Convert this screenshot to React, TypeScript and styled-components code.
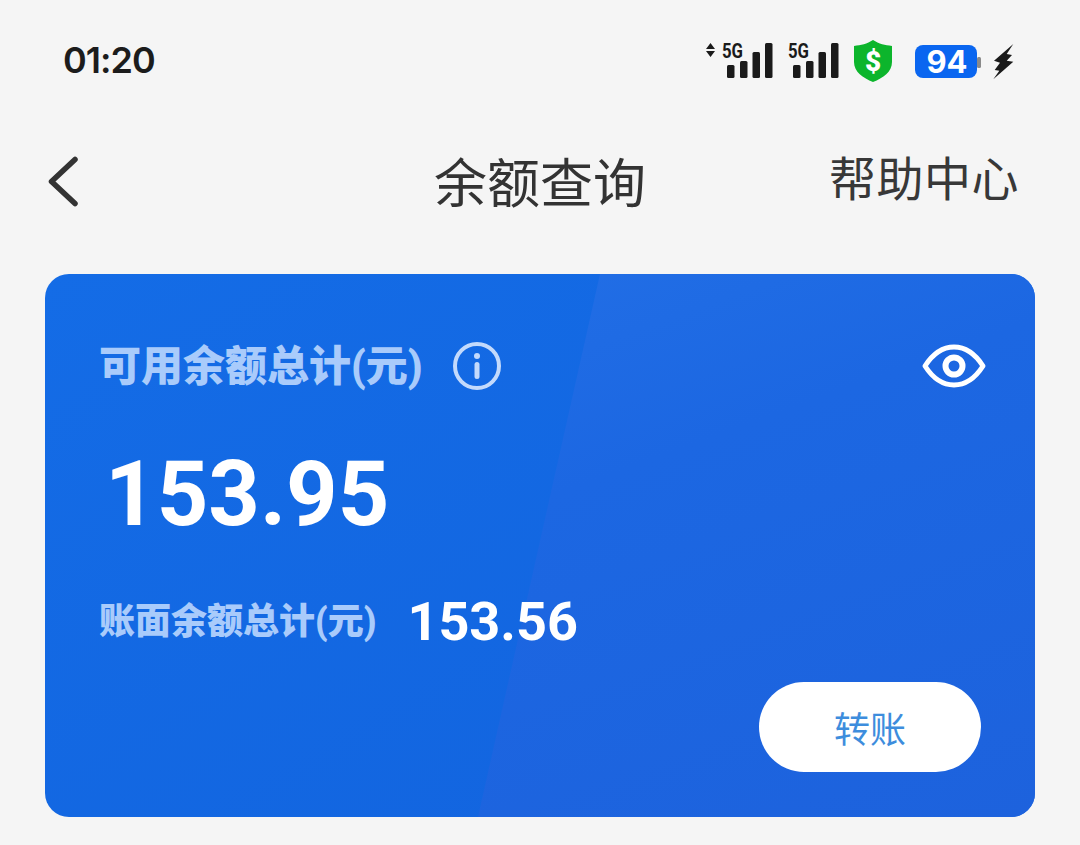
import React from 'react'
import styled, { createGlobalStyle } from 'styled-components'

const CJK = `Roboto, "Noto Sans CJK SC", sans-serif`

const GlobalStyle = createGlobalStyle`
  html, body {
    margin: 0;
    padding: 0;
    background: #f5f5f5;
  }
  body {
    font-family: ${CJK};
  }
`

const Page = styled.div`
  width: 1080px;
  height: 845px;
  overflow: hidden;
  background: #f5f5f5;
  display: flex;
  flex-direction: column;
`

const StatusBar = styled.div`
  height: 122px;
  padding: 0 60px 0 63px;
  box-sizing: border-box;
  display: flex;
  align-items: center;
  justify-content: space-between;
`

const Time = styled.div`
  font-family: Inter, sans-serif;
  font-size: 36px;
  font-weight: 600;
  letter-spacing: -1px;
  color: #1c1c1c;
  margin-top: -2px;
`

const NavBar = styled.div`
  height: 120px;
  padding: 0 61px 0 46px;
  margin-bottom: 32px;
  box-sizing: border-box;
  display: flex;
  align-items: center;
  justify-content: space-between;
  position: relative;
`

const Title = styled.div`
  position: absolute;
  left: 0;
  right: 0;
  text-align: center;
  font-size: 53px;
  font-weight: 400;
  color: #333;
  top: 29px;
  line-height: 68px;
`

const HelpLink = styled.div`
  font-size: 47px;
  letter-spacing: 0.5px;
  color: #383838;
  line-height: 64px;
  margin-top: -4px;
`

const Card = styled.div`
  position: relative;
  overflow: hidden;
  margin: 0 45px;
  height: 543px;
  border-radius: 24px;
  background: linear-gradient(150deg, #146ce6 0%, #1263de 100%);
  padding: 66px 49px 45px 54px;
  box-sizing: border-box;
  display: flex;
  flex-direction: column;
  &::before {
    content: '';
    position: absolute;
    inset: 0;
    clip-path: polygon(555px 0, 100% 0, 100% 100%, 433px 100%);
    background: linear-gradient(160deg, #2573e8 0%, #1c67e2 45%, #1d62dd 100%);
  }
`

const CardContent = styled.div`
  position: relative;
  display: flex;
  flex-direction: column;
  flex: 1;
`

const HeaderRow = styled.div`
  display: flex;
  align-items: center;
  justify-content: space-between;
  height: 52px;
`

const LabelGroup = styled.div`
  display: flex;
  align-items: center;
  gap: 30px;
`

const MainLabel = styled.div`
  font-size: 42px;
  font-weight: 900;
  color: #a9cbfb;
  line-height: 52px;
  margin-top: 2px;
`

const Amount = styled.div`
  font-family: Roboto, sans-serif;
  font-size: 90px;
  font-weight: 700;
  color: #fff;
  line-height: 100px;
  margin: 53px 0 0 6px;
`

const BookRow = styled.div`
  display: flex;
  align-items: center;
  gap: 31px;
  margin-top: 47px;
`

const BookLabel = styled.div`
  font-size: 36px;
  font-weight: 900;
  color: #a9cbfb;
  line-height: 60px;
`

const BookAmount = styled.div`
  font-family: Roboto, sans-serif;
  font-size: 54px;
  font-weight: 700;
  color: #fff;
  line-height: 60px;
`

const Footer = styled.div`
  margin-top: auto;
  display: flex;
  justify-content: flex-end;
`

const TransferButton = styled.div`
  width: 222px;
  height: 90px;
  margin-right: 5px;
  border-radius: 45px;
  background: #fff;
  color: #3d8ddd;
  font-size: 36px;
  display: flex;
  align-items: center;
  justify-content: center;
`

const BackIcon = () => (
  <svg width="34" height="52" viewBox="0 0 34 52" fill="none">
    <path d="M29 3.500 L5.500 25.500 L29 47.500" stroke="#333" strokeWidth="5.500" strokeLinecap="round" strokeLinejoin="round" />
  </svg>
)

const InfoIcon = () => (
  <svg width="48" height="48" viewBox="0 0 48 48" fill="none">
    <circle cx="24" cy="24" r="22" stroke="#c3dafc" strokeWidth="4" />
    <circle cx="24" cy="14" r="3" fill="#c3dafc" />
    <rect x="21.500" y="20" width="5" height="17" rx="2.500" fill="#c3dafc" />
  </svg>
)

const EyeIcon = () => (
  <svg width="64" height="44" viewBox="0 0 64 44" fill="none">
    <path d="M3 22 C12 8 22 3 32 3 C42 3 52 8 61 22 C52 36 42 41 32 41 C22 41 12 36 3 22 Z" stroke="#fff" strokeWidth="5" strokeLinejoin="round" />
    <circle cx="32" cy="22" r="8.500" stroke="#fff" strokeWidth="6" />
  </svg>
)

const SignalBars = ({ x }: { x: number }) => (
  <>
    <text x={x - 5} y="20" fontFamily="Roboto, sans-serif" fontWeight="700" fontSize="20" fill="#1a1a1a" textLength="21" lengthAdjust="spacingAndGlyphs">5G</text>
    <rect x={x} y="27" width="7.500" height="13" rx="1.500" fill="#1a1a1a" />
    <rect x={x + 13} y="23" width="7.500" height="17" rx="1.500" fill="#1a1a1a" />
    <rect x={x + 25.500} y="14" width="7.500" height="26" rx="1.500" fill="#1a1a1a" />
    <rect x={x + 38} y="5" width="7.500" height="35" rx="1.500" fill="#1a1a1a" />
  </>
)

const StatusGraphic = () => (
  <svg width="320" height="46" viewBox="0 0 320 46" fill="none">
    <path d="M6 11 L10.500 5 L15 11 Z M6 13 L15 13 L10.500 19 Z" fill="#1a1a1a" />
    <SignalBars x={27} />
    <SignalBars x={93} />
    <path d="M173 2 C179 6 185 7 192 8 L192 24 C192 34 183 40 173 44 C163 40 154 34 154 24 L154 8 C161 7 167 6 173 2 Z" fill="#0cb52c" />
    <text x="173" y="33" textAnchor="middle" fontFamily="Roboto, sans-serif" fontWeight="900" fontSize="28" fill="#fff">$</text>
    <rect x="215" y="7" width="62" height="33" rx="8" fill="#0a66f0" />
    <text x="247" y="35" textAnchor="middle" fontFamily="Inter, sans-serif" fontWeight="700" fontSize="31" fill="#fff">94</text>
    <rect x="277" y="19" width="4" height="11" rx="1.500" fill="#8a8a8a" />
    <path d="M313.300 6 L294 22.700 L300 24.700 L294.700 32 L299.300 32.700 L293.300 41.300 L313.300 23.700 L306.700 22.700 L312 17 L306.700 16 Z" fill="#1a1a1a" />
  </svg>
)

export default function App() {
  return (
    <Page>
      <GlobalStyle />
      <StatusBar>
        <Time>01:20</Time>
        <StatusGraphic />
      </StatusBar>
      <NavBar>
        <BackIcon />
        <Title>余额查询</Title>
        <HelpLink>帮助中心</HelpLink>
      </NavBar>
      <Card>
        <CardContent>
          <HeaderRow>
            <LabelGroup>
              <MainLabel>可用余额总计(元)</MainLabel>
              <InfoIcon />
            </LabelGroup>
            <EyeIcon />
          </HeaderRow>
          <Amount>153.95</Amount>
          <BookRow>
            <BookLabel>账面余额总计(元)</BookLabel>
            <BookAmount>153.56</BookAmount>
          </BookRow>
          <Footer>
            <TransferButton>转账</TransferButton>
          </Footer>
        </CardContent>
      </Card>
    </Page>
  )
}
